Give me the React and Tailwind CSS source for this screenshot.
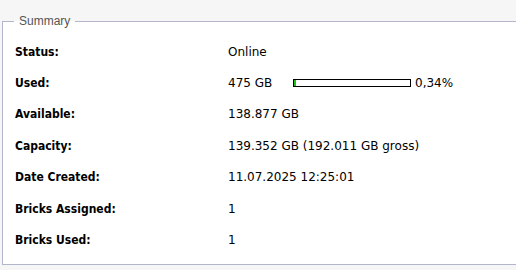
const ROWS = [
  { label: 'Status:', value: 'Online' },
  { label: 'Used:', value: '475 GB', usage: 0.34 },
  { label: 'Available:', value: '138.877 GB' },
  { label: 'Capacity:', value: '139.352 GB (192.011 GB gross)' },
  { label: 'Date Created:', value: '11.07.2025 12:25:01' },
  { label: 'Bricks Assigned:', value: '1' },
  { label: 'Bricks Used:', value: '1' },
]

function UsageBar({ percent }) {
  return (
    <span className="inline-flex items-center">
      <span className="inline-block w-[118px] h-[8px] border border-black bg-white">
        <span className="block h-full w-[2px] bg-[#1fbf1f]" />
      </span>
      <span className="ml-[4px]">{percent.toFixed(2).replace('.', ',')}%</span>
    </span>
  )
}

export default function App() {
  return (
    <div className="w-[516px] h-[270px] overflow-hidden bg-[#f6f6f6] pt-[14px] pl-[2px] font-['DejaVu_Sans',Verdana,sans-serif] text-[12px] text-black">
      <fieldset className="w-[530px] h-[251px] border border-[#b3b6cb] bg-white">
        <legend className="ml-[11px] px-[5px] leading-[14px] text-[12px] text-[#555] font-['Liberation_Sans',Arial,sans-serif]">
          Summary
        </legend>
        <div className="pt-[8px] pl-[12px]">
          {ROWS.map(row => (
            <div key={row.label} className="flex items-center h-[31.4px]">
              <div className="w-[213px] font-bold [font-stretch:condensed]">{row.label}</div>
              <div className="flex items-center">
                {row.usage != null ? (
                  <>
                    <span className="inline-block w-[65px]">{row.value}</span>
                    <UsageBar percent={row.usage} />
                  </>
                ) : (
                  row.value
                )}
              </div>
            </div>
          ))}
        </div>
      </fieldset>
    </div>
  )
}
